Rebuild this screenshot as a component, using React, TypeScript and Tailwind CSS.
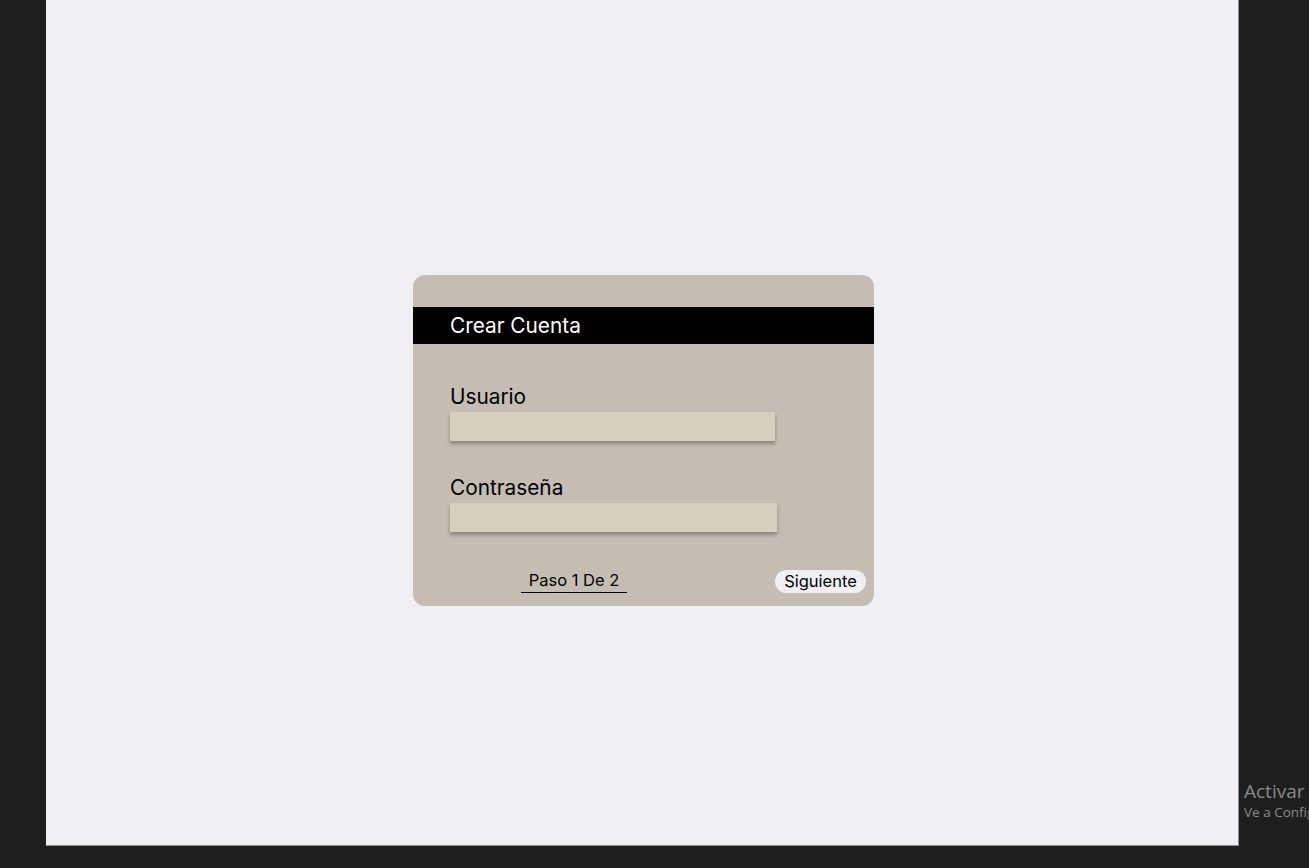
import React from 'react';

const Field: React.FC<{ label: string; width: string; top: string }> = ({ label, width, top }) => (
  <div className={`flex flex-col ${top}`}>
    <label className="text-[20.8px] leading-[26px] text-black">{label}</label>
    <div className={`mt-[2px] h-[29px] ${width} bg-[#d6cfbf] shadow-[0_3px_4px_rgba(0,0,0,0.3)]`} />
  </div>
);

const App: React.FC = () => {
  return (
    <div className="flex h-[868px] w-full overflow-hidden bg-[#1e1e1e] font-['Inter',sans-serif]">
      <div className="ml-[46px] h-[846px] w-[1193px] shrink-0 border-r border-b border-[#8d8d8d] bg-[#f0eff4] pl-[367px] pt-[275px]">
        <div className="flex h-[331px] w-[461px] flex-col rounded-[12px] bg-[#c5bcb3] pt-[32px]">
          <div className="flex h-[37px] items-center bg-black pl-[37px] pt-[1px]">
            <h1 className="text-[20.8px] leading-[24px] text-white">Crear Cuenta</h1>
          </div>
          <div className="flex flex-col pl-[37px]">
            <Field label="Usuario" width="w-[325px]" top="mt-[40px]" />
            <Field label="Contraseña" width="w-[327px]" top="mt-[34px]" />
          </div>
          <div className="mt-[38px] flex items-start justify-between pl-[108px] pr-[8px]">
            <span className="w-[106px] border-b border-black pb-[2px] text-center text-[16.5px] leading-[20px] text-black">
              Paso 1 De 2
            </span>
            <button className="h-[23px] w-[91px] rounded-full bg-[#f0eff4] text-[16.5px] leading-[23px] text-black">
              Siguiente
            </button>
          </div>
        </div>
      </div>
      <div className="flex min-w-0 flex-1 flex-col overflow-hidden whitespace-nowrap pl-[5px] pt-[779px] font-['Open_Sans',sans-serif] text-[#8a8a8a]">
        <span className="text-[19px] leading-[24px]">Activar</span>
        <span className="text-[13.5px] leading-[18px]">Ve a Configuración</span>
      </div>
    </div>
  );
};

export default App;
